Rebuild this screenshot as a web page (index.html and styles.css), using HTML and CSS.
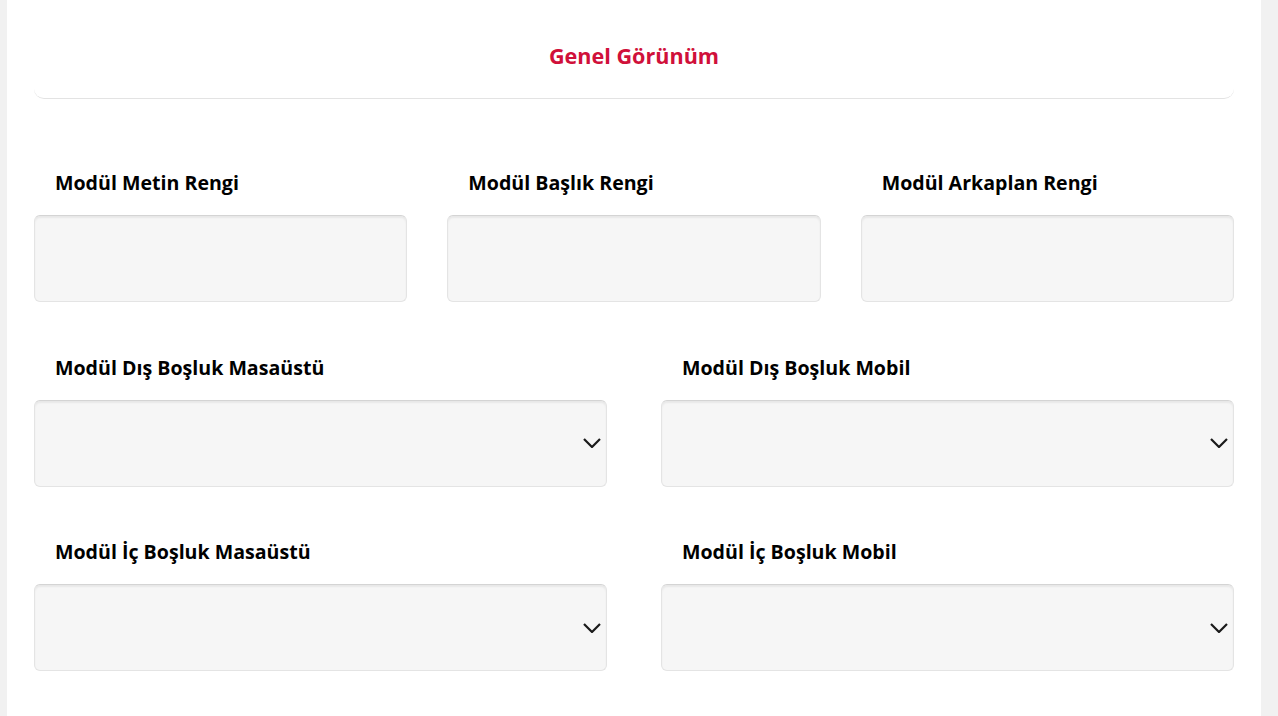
FILE: index.html
```html
<!DOCTYPE html>
<html lang="tr">
<head>
<meta charset="utf-8">
<title>Genel Görünüm</title>
<link rel="stylesheet" href="styles.css">
</head>
<body>
<div class="panel">
  <div class="header"><h2 class="title">Genel Görünüm</h2></div>
  <div class="form">
    <div class="row row-3">
      <div class="field"><label class="label">Modül Metin Rengi</label><div class="input"></div></div>
      <div class="field"><label class="label">Modül Başlık Rengi</label><div class="input"></div></div>
      <div class="field"><label class="label">Modül Arkaplan Rengi</label><div class="input"></div></div>
    </div>
    <div class="row row-2">
      <div class="field"><label class="label">Modül Dış Boşluk Masaüstü</label><div class="input select"><svg class="chev" width="18" height="10" viewBox="0 0 18 10"><path d="M1 1 L9 9 L17 1" fill="none" stroke="#1a1a1a" stroke-width="2.2"/></svg></div></div>
      <div class="field"><label class="label">Modül Dış Boşluk Mobil</label><div class="input select"><svg class="chev" width="18" height="10" viewBox="0 0 18 10"><path d="M1 1 L9 9 L17 1" fill="none" stroke="#1a1a1a" stroke-width="2.2"/></svg></div></div>
    </div>
    <div class="row row-2">
      <div class="field"><label class="label">Modül İç Boşluk Masaüstü</label><div class="input select"><svg class="chev" width="18" height="10" viewBox="0 0 18 10"><path d="M1 1 L9 9 L17 1" fill="none" stroke="#1a1a1a" stroke-width="2.2"/></svg></div></div>
      <div class="field"><label class="label">Modül İç Boşluk Mobil</label><div class="input select"><svg class="chev" width="18" height="10" viewBox="0 0 18 10"><path d="M1 1 L9 9 L17 1" fill="none" stroke="#1a1a1a" stroke-width="2.2"/></svg></div></div>
    </div>
  </div>
</div>
</body>
</html>
```
FILE: styles.css
```css
html, body { margin: 0; padding: 0; }
body {
  background: #f1f1f1;
  font-family: "Open Sans", "Liberation Sans", sans-serif;
  height: 716px;
  overflow: hidden;
}
.panel {
  margin: 0 17px 0 7px;
  background: #fff;
  height: 716px;
  padding: 0 27px;
  box-sizing: border-box;
}
.header {
  height: 99px;
  border-bottom: 1px solid #e3e3e3;
  border-radius: 0 0 10px 10px;
  display: flex;
  align-items: flex-start;
  justify-content: center;
  box-sizing: border-box;
}
.title {
  margin: 41px 0 0;
  font-size: 21.6px;
  line-height: 30px;
  font-weight: 700;
  color: #d0103a;
}
.form { padding-top: 71px; }
.row { display: grid; margin-bottom: 52.5px; }
.row-3 { grid-template-columns: repeat(3, 1fr); column-gap: 40px; }
.row-2 { grid-template-columns: repeat(2, 1fr); column-gap: 54px; }
.field { display: flex; flex-direction: column; }
.label {
  font-size: 19.6px;
  line-height: 26px;
  font-weight: 700;
  color: #000;
  padding-left: 21px;
  margin-bottom: 19px;
}
.input {
  height: 87px;
  background: #f6f6f6;
  border: 1px solid #e4e4e4;
  border-top-color: #d4d4d4;
  border-radius: 6px;
  box-shadow: inset 0 2px 2px rgba(0,0,0,0.06);
  box-sizing: border-box;
  position: relative;
}
.select { display: flex; align-items: center; justify-content: flex-end; padding-right: 5px; }
.chev { display: block; }
```
